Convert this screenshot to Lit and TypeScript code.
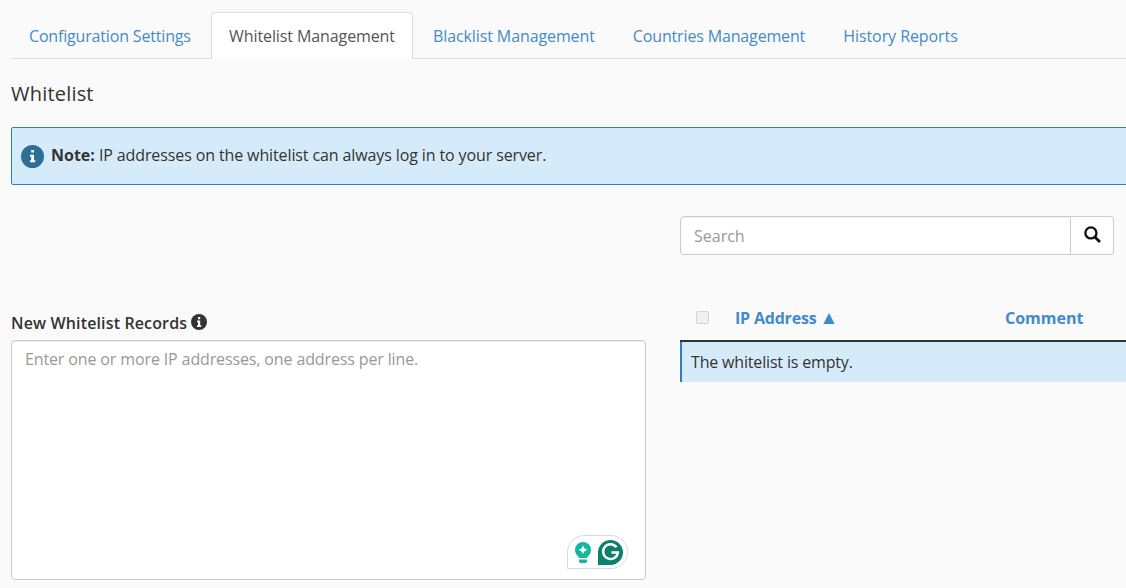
import { LitElement, html, css } from "lit";
import { customElement } from "lit/decorators.js";

const tabs = [
  { label: "Configuration Settings", spacing: -0.17 },
  { label: "Whitelist Management", spacing: -0.1 },
  { label: "Blacklist Management", spacing: -0.1 },
  { label: "Countries Management", spacing: -0.15 },
  { label: "History Reports", spacing: -0.07 },
];

@customElement("app-root")
export class AppRoot extends LitElement {
  static styles = css`
    :host {
      display: block;
      width: 1126px;
      height: 588px;
      overflow: hidden;
      background: #fafafa;
      font-family: "Open Sans", sans-serif;
      font-size: 16px;
      line-height: 24px;
      color: #333;
    }
    .page {
      width: 1300px;
      box-sizing: border-box;
      padding: 12px 0 0 11px;
    }
    .tabs {
      display: flex;
      width: 1115px;
      height: 47px;
      box-sizing: border-box;
      border-bottom: 1px solid #ddd;
    }
    .tab {
      box-sizing: border-box;
      height: 47px;
      margin-right: 2px;
      padding: 12px 18px;
      color: #428bca;
      white-space: nowrap;
    }
    .tab.active {
      padding: 11px 17px 11px 17.3px;
      background: #fff;
      color: #555;
      border: 1px solid #ddd;
      border-bottom: none;
      border-radius: 4px 4px 0 0;
    }
    h1 {
      margin: 20px 0 18px;
      font-size: 20px;
      line-height: 30px;
      font-weight: 400;
      letter-spacing: 0.2px;
    }
    .alert {
      display: flex;
      align-items: center;
      gap: 7px;
      box-sizing: border-box;
      height: 58px;
      padding-left: 9px;
      background: #d6ebf9;
      border: 1px solid #2f7fbf;
      border-radius: 2px;
    }
    .alert svg {
      width: 23px;
      height: 23px;
      flex: none;
    }
    .alert .text {
      padding-bottom: 2px;
      letter-spacing: -0.115px;
    }
    .alert b {
      font-weight: 700;
      letter-spacing: 0;
    }
    .columns {
      display: grid;
      grid-template-columns: 635px 1fr;
      column-gap: 34px;
      margin-top: 31px;
    }
    .left {
      padding-top: 95px;
    }
    .label {
      display: flex;
      align-items: center;
      gap: 4px;
      height: 24px;
      margin-bottom: 5px;
      font-weight: 600;
      line-height: 24px;
      letter-spacing: 0.14px;
    }
    .label svg {
      width: 16px;
      height: 16px;
      margin-bottom: 2px;
    }
    .area {
      position: relative;
      box-sizing: border-box;
      height: 240px;
      padding: 6px 13px;
      background: #fff;
      border: 1px solid #ccc;
      border-radius: 4px;
      box-shadow: inset 0 1px 1px rgba(0, 0, 0, 0.075);
      color: #999;
      letter-spacing: -0.13px;
    }
    .badge {
      position: absolute;
      left: 555px;
      top: 194px;
      display: flex;
      align-items: center;
      gap: 6px;
      box-sizing: border-box;
      width: 61px;
      height: 34px;
      padding-left: 6px;
      background: #fff;
      border: 1px solid #d5dbe6;
      border-radius: 17px 17px 17px 0;
    }
    .search {
      display: flex;
      width: 434px;
      height: 39px;
    }
    .search .input {
      flex: 1;
      box-sizing: border-box;
      padding: 7px 13px;
      background: #fff;
      border: 1px solid #ccc;
      border-radius: 4px 0 0 4px;
      box-shadow: inset 0 1px 1px rgba(0, 0, 0, 0.075);
      color: #999;
    }
    .search .btn {
      display: flex;
      align-items: center;
      justify-content: center;
      box-sizing: border-box;
      width: 43px;
      background: #fff;
      border: 1px solid #ccc;
      border-left: none;
      border-radius: 0 4px 4px 0;
    }
    .search .btn svg {
      width: 17px;
      height: 17px;
      margin-bottom: 3px;
    }
    .thead {
      display: flex;
      align-items: center;
      box-sizing: border-box;
      height: 45px;
      margin-top: 42px;
      padding-bottom: 2px;
      border-bottom: 2px solid #2e3436;
      color: #428bca;
      font-weight: 700;
    }
    .check {
      box-sizing: border-box;
      width: 13px;
      height: 13px;
      margin: 0 26px 0 16px;
      background: #f1f1f1;
      border: 1px solid #d4d4d4;
      border-radius: 2px;
    }
    .ip {
      width: 270px;
      letter-spacing: -0.2px;
    }
    .arrow {
      font-size: 19px;
      line-height: 20px;
      margin-left: -1px;
    }
    .row {
      box-sizing: border-box;
      height: 40px;
      padding: 8px 9px;
      background: #d6ebf9;
      border-left: 2px solid #2f7fbf;
      letter-spacing: -0.17px;
    }
  `;

  render() {
    return html`
      <div class="page">
        <div class="tabs">
          ${tabs.map(
            (t, i) => html`<div
              class="tab ${i === 1 ? "active" : ""}"
              style="letter-spacing:${t.spacing}px"
            >${t.label}</div>`
          )}
        </div>
        <h1>Whitelist</h1>
        <div class="alert">
          <svg viewBox="0 0 23 23">
            <circle cx="11.5" cy="11.5" r="11.5" fill="#2e7095" />
            <path
              fill="#fff"
              d="M10.200 5h2.800v2.600h-2.800zM9 9.800h4v5.400h1.300v2H9v-2h1.200v-3.400H9z"
            />
          </svg>
          <div class="text"><b>Note:</b> IP addresses on the whitelist can always log in to your server.</div>
        </div>
        <div class="columns">
          <div class="left">
            <div class="label">
              New Whitelist Records
              <svg viewBox="0 0 16 16">
                <circle cx="8" cy="8" r="8" fill="#333" />
                <path fill="#fff" d="M7 3h2.2v2.2H7zM6 6.6h3.2v4.6h1v1.700H6v-1.700h1V8.300H6z" />
              </svg>
            </div>
            <div class="area">
              Enter one or more IP addresses, one address per line.
              <div class="badge">
                <svg width="18" height="21" viewBox="2 1 16 21">
                  <path
                    fill="#15b5a0"
                    d="M10 1a8 8 0 0 1 8 8c0 3-1.600 4.800-3 6.200-.6.6-1 1.300-1 1.800H6c0-.5-.4-1.200-1-1.800C3.600 13.800 2 12 2 9a8 8 0 0 1 8-8zM6 18.500h8v1.500c0 1-.8 2-1.500 2h-5C6.800 22 6 21 6 20z"
                  />
                  <path fill="#fff" d="M10 4c.5 2.700 1.800 4.100 4.800 4.800-3 .7-4.300 2.100-4.800 4.800-.5-2.700-1.800-4.100-4.800-4.800 3-.7 4.300-2.100 4.800-4.800z" />
                </svg>
                <svg width="25" height="25" viewBox="0 0 27 27">
                  <path fill="#0d7f6c" d="M13.500 0a13.500 13.500 0 1 1 0 27H0V13.500A13.500 13.500 0 0 1 13.500 0z" />
                  <path
                    fill="none"
                    stroke="#fff"
                    stroke-width="2.600"
                    d="M20 7.800a8 8 0 1 0 1.500 5.700h-7"
                  />
                </svg>
              </div>
            </div>
          </div>
          <div class="right">
            <div class="search">
              <div class="input">Search</div>
              <div class="btn">
                <svg viewBox="0 0 16 16">
                  <circle cx="6.500" cy="6.500" r="5.200" fill="none" stroke="#111" stroke-width="2.200" />
                  <path d="M10.500 10.500L15 15" stroke="#111" stroke-width="2.600" />
                </svg>
              </div>
            </div>
            <div class="thead">
              <div class="check"></div>
              <div class="ip">IP Address <span class="arrow">▲</span></div>
              <div>Comment</div>
            </div>
            <div class="row">The whitelist is empty.</div>
          </div>
        </div>
      </div>
    `;
  }
}
